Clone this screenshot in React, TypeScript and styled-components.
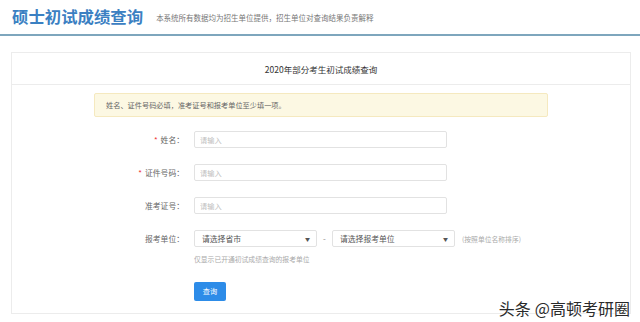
import React from "react";
import styled, { createGlobalStyle } from "styled-components";

const Global = createGlobalStyle`
  html, body { margin: 0; padding: 0; background: #fff; }
  body { font-family: "Noto Sans CJK SC", "Noto Sans", sans-serif; color: #555; }
  * { box-sizing: border-box; }
`;

const Page = styled.div`
  position: relative;
  width: 640px;
  height: 322px;
  overflow: hidden;
  background: #fff;
`;

const Header = styled.header`
  height: 36px;
  display: flex;
  align-items: center;
  padding: 0 0 2px 12px;
  border-bottom: 2px solid #7ea6bd;
  gap: 13px;
`;

const Title = styled.h1`
  margin: 0;
  font-size: 16.4px;
  font-weight: 700;
  color: #3b80c2;
  letter-spacing: 0;
  line-height: 1;
`;

const Subtitle = styled.span`
  font-size: 7.5px;
  color: #777;
  margin-top: 2px;
`;

const Panel = styled.section`
  margin: 16px 9px 0 11px;
  border: 1px solid #ececec;
  height: 262px;
`;

const PanelHead = styled.div`
  height: 32px;
  border-bottom: 1px solid #ececec;
  display: flex;
  align-items: center;
  justify-content: center;
  font-size: 8.5px;
  color: #333;
`;

const PanelBody = styled.div`
  width: 454px;
  margin: 0 auto;
  padding-top: 8px;
`;

const Alert = styled.div`
  height: 24px;
  background: #fcf8e3;
  border: 1px solid #f5e9bf;
  border-radius: 2px;
  display: flex;
  align-items: center;
  padding-left: 11px;
  font-size: 7.2px;
  color: #666;
  margin-bottom: 14px;
`;

const Row = styled.div<{ $mb?: number }>`
  display: flex;
  align-items: center;
  height: 17px;
  margin-bottom: ${(p) => p.$mb ?? 16}px;
`;

const Label = styled.label`
  width: 92px;
  text-align: right;
  padding-right: 2px;
  font-size: 7.8px;
  color: #666;
  flex-shrink: 0;
`;

const Star = styled.span`
  color: #e33;
  margin-right: 3px;
`;

const Field = styled.div`
  margin-left: 8px;
  display: flex;
  align-items: center;
`;

const Input = styled.input`
  width: 253px;
  height: 17px;
  border: 1px solid #e2e2e2;
  border-radius: 2px;
  padding: 0 5px;
  font-family: inherit;
  font-size: 7.2px;
  outline: none;
  &::placeholder { color: #c0c0c0; }
`;

const Select = styled.div`
  width: 123px;
  height: 17px;
  border: 1px solid #e2e2e2;
  border-radius: 2px;
  display: flex;
  align-items: center;
  justify-content: space-between;
  padding: 0 6px 0 7px;
  font-size: 7.8px;
  color: #555;
`;

const Caret = styled.span`
  font-size: 5px;
  color: #555;
`;

const Dash = styled.span`
  width: 15px;
  text-align: center;
  font-size: 8px;
  color: #888;
`;

const Hint = styled.span`
  margin-left: 7px;
  font-size: 6.8px;
  color: #aaa;
`;

const Note = styled.div`
  margin-left: 100px;
  font-size: 6.8px;
  color: #aaa;
  margin-bottom: 10px;
  height: 12px;
  line-height: 12px;
`;

const Button = styled.button`
  margin-left: 100px;
  width: 32px;
  height: 19px;
  background: #2d8ce8;
  border: none;
  border-radius: 2px;
  color: #fff;
  font-family: inherit;
  font-size: 7.2px;
  padding: 0;
`;

const Watermark = styled.div`
  position: absolute;
  right: 10px;
  bottom: 4px;
  font-size: 16px;
  line-height: 19px;
  color: #2a2a2a;
  text-shadow: 0 0 2px #fff, 0 0 2px #fff;
  display: flex;
  gap: 4px;
`;

export default function App() {
  return (
    <Page>
      <Global />
      <Header>
        <Title>硕士初试成绩查询</Title>
        <Subtitle>本系统所有数据均为招生单位提供，招生单位对查询结果负责解释</Subtitle>
      </Header>
      <Panel>
        <PanelHead>2020年部分考生初试成绩查询</PanelHead>
        <PanelBody>
          <Alert>姓名、证件号码必填，准考证号和报考单位至少填一项。</Alert>
          <Row>
            <Label><Star>*</Star>姓名：</Label>
            <Field><Input placeholder="请输入" /></Field>
          </Row>
          <Row>
            <Label><Star>*</Star>证件号码：</Label>
            <Field><Input placeholder="请输入" /></Field>
          </Row>
          <Row>
            <Label>准考证号：</Label>
            <Field><Input placeholder="请输入" /></Field>
          </Row>
          <Row $mb={6}>
            <Label>报考单位：</Label>
            <Field>
              <Select>请选择省市<Caret>▼</Caret></Select>
              <Dash>-</Dash>
              <Select>请选择报考单位<Caret>▼</Caret></Select>
              <Hint>(按照单位名称排序)</Hint>
            </Field>
          </Row>
          <Note>仅显示已开通初试成绩查询的报考单位</Note>
          <Button>查询</Button>
        </PanelBody>
      </Panel>
      <Watermark><span>头条</span><span>@高顿考研圈</span></Watermark>
    </Page>
  );
}
